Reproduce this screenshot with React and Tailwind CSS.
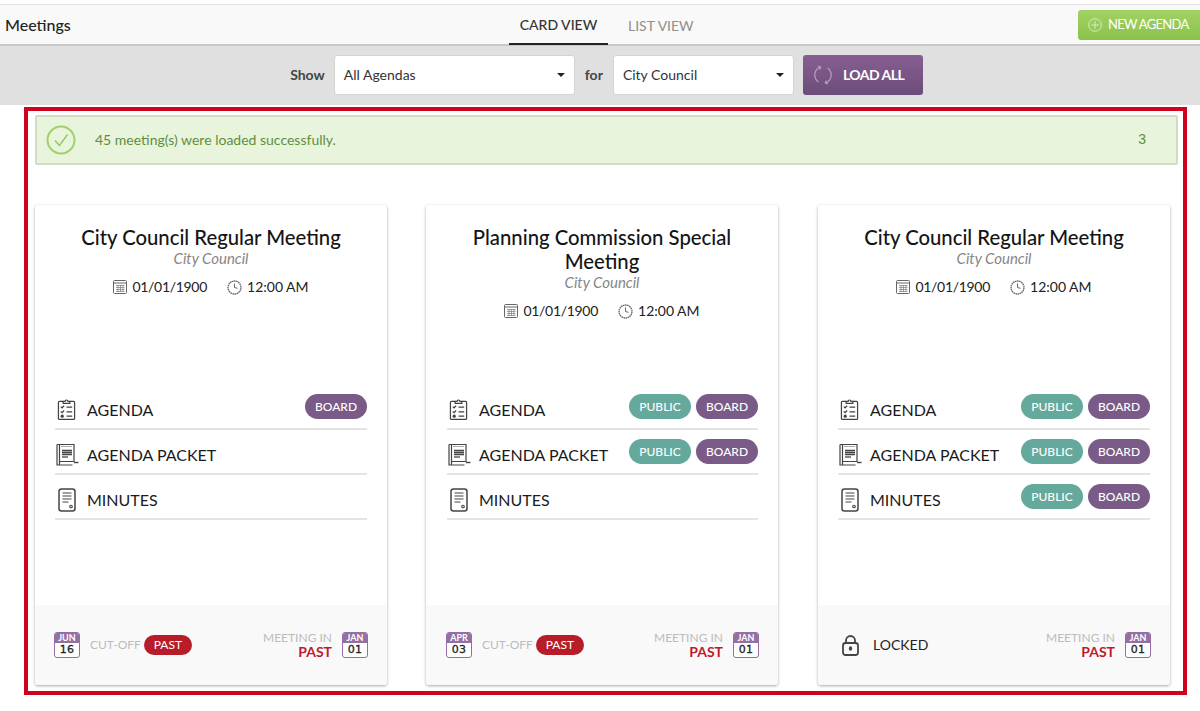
import React from "react";

const Calendar = () => (
  <svg width="14" height="14" viewBox="0 0 14 14" fill="none" stroke="#666" strokeWidth="1" className="shrink-0">
    <rect x="0.5" y="0.5" width="13" height="13" rx="1" />
    <path d="M0.5 3h13" />
    <path d="M3 5.500h8.500M3 7.500h8.500M3 9.500h8.500M3 11.500h8.500M5 5v7M7.500 5v7M10 5v7" stroke="#888" strokeWidth="0.8" />
  </svg>
);

const Clock = () => (
  <svg width="15" height="15" viewBox="0 0 15 15" fill="none" stroke="#666" className="shrink-0">
    <circle cx="7.500" cy="7.500" r="6.500" strokeWidth="1.300" strokeDasharray="1.600 0.500" />
    <path d="M7.500 3.500v4l3 .8" strokeWidth="1" />
  </svg>
);

const AgendaIcon = () => (
  <svg width="19" height="23" viewBox="0 0 20 24" fill="none" stroke="#444" strokeWidth="1.300" className="ml-[2px]">
    <path d="M6.500 3.500H2.500a1 1 0 0 0-1 1v17a1 1 0 0 0 1 1h15a1 1 0 0 0 1-1v-17a1 1 0 0 0-1-1h-4" />
    <path d="M6.500 5.500v-2h2a1.500 1.500 0 0 1 3 0h2v2z" />
    <path d="M4 9l1.300 1.300L7.500 8M4 14l1.300 1.300L7.500 13" strokeWidth="1.400" />
    <circle cx="5.500" cy="19" r="1.700" fill="#444" stroke="none" />
    <path d="M10 9.500h6M10 14.500h6M10 19h6" strokeWidth="1.500" />
  </svg>
);

const PacketIcon = () => (
  <svg width="23" height="23" viewBox="0 0 23 23" fill="none" stroke="#444" strokeWidth="1.200" className="ml-[1px]">
    <path d="M3.500 1.500h14.500v17H3.500zM1 1.500v20.500h15.500M1 1.500h2.500M3.500 18.500v3.500" />
    <path d="M18 19.500h4.500" strokeWidth="1.400" />
    <path d="M5.500 3.500h10.500" strokeDasharray="1 1" strokeWidth="0.900" />
    <path d="M6 7.500h10M6 9.500h10M6 11.500h10" strokeWidth="1.300" />
    <path d="M6 14h6" strokeWidth="1.300" />
  </svg>
);

const MinutesIcon = () => (
  <svg width="18" height="24" viewBox="0 0 18 24" fill="none" stroke="#444" className="ml-[3px]">
    <rect x="1" y="1" width="16" height="22" rx="2.500" strokeWidth="1.500" />
    <path d="M4.500 5h9M4.500 8h9M4.500 11h9M4.500 14h6" strokeWidth="1.200" />
    <circle cx="13" cy="18.500" r="1.300" strokeWidth="1.100" />
  </svg>
);

const LockIcon = () => (
  <svg width="17" height="21" viewBox="0 0 17 21" fill="none" stroke="#444" className="ml-[5px]">
    <path d="M4 8.500V5.500a4.500 4.500 0 0 1 9 0v3" strokeWidth="1.800" />
    <rect x="1" y="8" width="15" height="12" rx="2.500" strokeWidth="1.800" />
    <ellipse cx="8.500" cy="13.500" rx="1.700" ry="2.200" fill="#444" stroke="none" />
  </svg>
);

const Pill = ({ kind }) => (
  <span
    className={
      "flex h-[25px] w-[62px] items-center justify-center rounded-full text-[12px] font-medium text-white " +
      (kind === "PUBLIC" ? "bg-[#64a99b]" : "bg-[#7a5a87]")
    }
  >
    {kind}
  </span>
);

const Row = ({ icon, label, pills }) => (
  <div className="relative flex h-[45px] items-center border-b-2 border-[#e4e4e4] pt-[6px]">
    <span className="flex w-[32px] shrink-0 justify-start">{icon}</span>
    <span className="text-[16px] leading-none text-[#1b1b1b]">{label}</span>
    <div className="absolute top-[9px] right-0 flex gap-[5px]">
      {pills.map((p) => (
        <Pill key={p} kind={p} />
      ))}
    </div>
  </div>
);

const DateBadge = ({ month, day }) => (
  <div className="flex h-[26px] w-[26px] shrink-0 flex-col overflow-hidden rounded-[3px] border border-[#946fa3] bg-white text-center">
    <div className="h-[10px] bg-[#946fa3] text-[9px] leading-[10px] font-bold text-white">{month}</div>
    <div className="text-[11px] leading-[14px] tracking-[0.3px] text-[#222] [-webkit-text-stroke:0.3px_#222] [font-family:'DejaVu_Sans',sans-serif]">{day}</div>
  </div>
);

const Card = ({ title, rows, cutoff, className = "", rowsClass = "pl-5", footClass = "pl-[19px]" }) => (
  <div className={"flex h-[480px] flex-col overflow-hidden rounded-[3px] bg-white shadow-[0_1px_3px_rgba(0,0,0,0.35)] " + className}>
    <div className="flex-1 px-5 pt-[20px]">
      <h2 className="text-center text-[20.300px] leading-[24px] font-medium text-[#141414]">{title}</h2>
      <div className="text-center text-[15px] leading-[18px] text-[#868686] italic">City Council</div>
      <div className="mt-[11px] flex items-center justify-center text-[14px] leading-[18px] text-[#222]">
        <Calendar />
        <span className="ml-[5px] tracking-[-0.3px]">01/01/1900</span>
        <span className="ml-[20px]"><Clock /></span>
        <span className="ml-[5px]">12:00 AM</span>
      </div>
    </div>
    <div className={"mb-[85px] pr-5 " + rowsClass}>
      {rows.map((r) => (
        <Row key={r.label} {...r} />
      ))}
    </div>
    <div className={"flex h-[80px] items-center justify-between bg-[#f9f9f9] pr-[19px] " + footClass}>
      {cutoff ? (
        <div className="flex items-center">
          <DateBadge month={cutoff.month} day={cutoff.day} />
          <span className="ml-[10px] text-[12px] text-[#bcbcbc]">CUT-OFF</span>
          <span className="ml-[3px] flex h-[20px] w-[48px] items-center justify-center rounded-full bg-[#b81c29] text-[12px] text-white">PAST</span>
        </div>
      ) : (
        <div className="flex items-center">
          <LockIcon />
          <span className="ml-[14px] mb-[2px] text-[14px] text-[#222]">LOCKED</span>
        </div>
      )}
      <div className="flex items-center">
        <div className="text-right">
          <div className="text-[12px] leading-[14px] text-[#bcbcbc]">MEETING IN</div>
          <div className="text-[14px] leading-[14px] font-bold text-[#c0192a]">PAST</div>
        </div>
        <span className="ml-[10px]"><DateBadge month="JAN" day="01" /></span>
      </div>
    </div>
  </div>
);

export default function App() {
  return (
    <div className="h-[711px] overflow-hidden bg-white font-['Lato',sans-serif]">
      <div className="mt-[4px] flex h-[42px] items-center justify-between border-t border-[#e6e6e6] border-b-2 border-b-[#c9c9c9] bg-[#f9f9f9] pl-[5px]">
        <span className="w-[300px] text-[16px] font-medium text-[#222]">Meetings</span>
        <div className="ml-[204px] flex h-full">
          <span className="flex h-[40px] w-[99px] items-center justify-center border-b-2 border-[#222] text-[14px] font-medium text-[#333]">CARD VIEW</span>
          <span className="ml-[20px] flex h-[40px] items-center text-[14px] text-[#8f8f8f]">LIST VIEW</span>
        </div>
        <button className="ml-auto flex h-[30px] w-[122px] items-center rounded-l-[3px] bg-gradient-to-b from-[#a2d264] to-[#8bc24c] pl-[10px] text-[13px] text-white">
          <svg width="14" height="14" viewBox="0 0 14 14" fill="none" stroke="#d8eebd" strokeWidth="1">
            <circle cx="7" cy="7" r="6.300" />
            <path d="M7 3v8M3 7h8" />
          </svg>
          <span className="ml-[6px] tracking-[-0.7px]">NEW AGENDA</span>
        </button>
      </div>
      <div className="flex h-[59px] items-center justify-center bg-[#e0e0e0] pb-[2px] pl-[13px]">
        <span className="text-[14px] font-bold text-[#444]">Show</span>
        <div className="ml-[9px] flex h-[40px] w-[241px] items-center justify-between rounded-[3px] border border-[#d4d4d4] bg-white pr-[9px] pl-[9px] text-[14px] text-[#333]">
          All Agendas
          <span className="h-0 w-0 border-x-[4px] border-t-[4px] border-x-transparent border-t-[#222]" />
        </div>
        <span className="ml-[10px] text-[14px] font-bold text-[#444]">for</span>
        <div className="ml-[10px] flex h-[40px] w-[181px] items-center justify-between rounded-[3px] border border-[#d4d4d4] bg-white pr-[9px] pl-[9px] text-[14px] text-[#333]">
          City Council
          <span className="h-0 w-0 border-x-[4px] border-t-[4px] border-x-transparent border-t-[#222]" />
        </div>
        <button className="ml-[9px] flex h-[40px] w-[120px] items-center rounded-[3px] bg-gradient-to-b from-[#875f92] to-[#6b4d79] pl-[10px] text-[14px] font-bold tracking-[-0.5px] text-white">
          <svg width="20" height="20" viewBox="0 0 20 20" fill="none" stroke="#b5a3bc" strokeWidth="1.200">
            <path d="M5.500 17a8.500 8.500 0 0 1 0-14l2-1M14.500 3a8.500 8.500 0 0 1 0 14l-2 1" />
            <path d="M5 1l2.700 1L6.500 4.500M15 19l-2.700-1 1.200-2.500" />
          </svg>
          <span className="ml-[10px]">LOAD ALL</span>
        </button>
      </div>
      <div className="mt-[2px] ml-[24px] h-[588px] w-[1163px] border-4 border-[#d0021f]">
        <div className="mt-[4px] ml-[7px] flex h-[50px] w-[1143px] items-center rounded-[2px] border-2 border-[#d2dcc4] bg-[#e9f4dc] pr-[30px] pl-[9px] text-[14px] text-[#5f8f3e]">
          <svg width="30" height="30" viewBox="0 0 30 30" fill="none" className="shrink-0">
            <circle cx="15" cy="15" r="13.500" stroke="#a0d16a" strokeWidth="2" />
            <path d="M9 15.500l4.500 5L21.500 9.500" stroke="#8fc45c" strokeWidth="1.300" />
          </svg>
          <span className="mb-[2px] ml-[19px]">45 meeting(s) were loaded successfully.</span>
          <span className="mb-[2px] ml-auto [font-family:'Liberation_Sans',sans-serif]">3</span>
        </div>
        <div className="mt-[40px] ml-[7px] grid w-[1136px] grid-cols-[352px_352px_353px] gap-x-[39px]">
          <Card
            title="City Council Regular Meeting"
            cutoff={{ month: "JUN", day: "16" }}
            rows={[
              { icon: <AgendaIcon />, label: "AGENDA", pills: ["BOARD"] },
              { icon: <PacketIcon />, label: "AGENDA PACKET", pills: [] },
              { icon: <MinutesIcon />, label: "MINUTES", pills: [] },
            ]}
          />
          <Card
            rowsClass="pl-[21px]"
            footClass="pl-[20px]"
            title="Planning Commission Special Meeting"
            cutoff={{ month: "APR", day: "03" }}
            rows={[
              { icon: <AgendaIcon />, label: "AGENDA", pills: ["PUBLIC", "BOARD"] },
              { icon: <PacketIcon />, label: "AGENDA PACKET", pills: ["PUBLIC", "BOARD"] },
              { icon: <MinutesIcon />, label: "MINUTES", pills: [] },
            ]}
          />
          <Card
            className="ml-[1px]"
            title="City Council Regular Meeting"
            rows={[
              { icon: <AgendaIcon />, label: "AGENDA", pills: ["PUBLIC", "BOARD"] },
              { icon: <PacketIcon />, label: "AGENDA PACKET", pills: ["PUBLIC", "BOARD"] },
              { icon: <MinutesIcon />, label: "MINUTES", pills: ["PUBLIC", "BOARD"] },
            ]}
          />
        </div>
      </div>
    </div>
  );
}
